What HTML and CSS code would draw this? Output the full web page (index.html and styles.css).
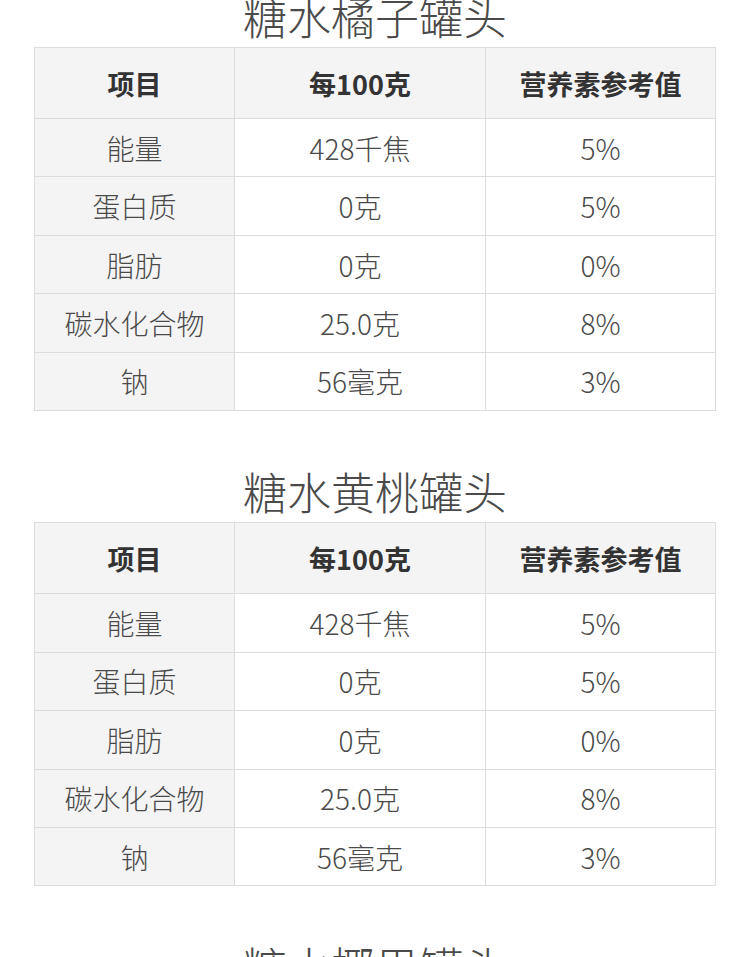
FILE: index.html
```html
<!DOCTYPE html>
<html lang="zh-CN">
<head>
<meta charset="utf-8">
<title>营养成分表</title>
<link rel="stylesheet" href="styles.css">
</head>
<body>
<main class="page">
  <section class="product first">
    <h2 class="product-title">糖水橘子罐头</h2>
    <table class="nutrition">
      <thead>
        <tr><th class="c1">项目</th><th class="c2">每100克</th><th class="c3">营养素参考值</th></tr>
      </thead>
      <tbody>
        <tr><td class="c1">能量</td><td>428千焦</td><td>5%</td></tr>
        <tr><td class="c1">蛋白质</td><td>0克</td><td>5%</td></tr>
        <tr><td class="c1">脂肪</td><td>0克</td><td>0%</td></tr>
        <tr><td class="c1">碳水化合物</td><td>25.0克</td><td>8%</td></tr>
        <tr><td class="c1">钠</td><td>56毫克</td><td>3%</td></tr>
      </tbody>
    </table>
  </section>
  <section class="product">
    <h2 class="product-title">糖水黄桃罐头</h2>
    <table class="nutrition">
      <thead>
        <tr><th class="c1">项目</th><th class="c2">每100克</th><th class="c3">营养素参考值</th></tr>
      </thead>
      <tbody>
        <tr><td class="c1">能量</td><td>428千焦</td><td>5%</td></tr>
        <tr><td class="c1">蛋白质</td><td>0克</td><td>5%</td></tr>
        <tr><td class="c1">脂肪</td><td>0克</td><td>0%</td></tr>
        <tr><td class="c1">碳水化合物</td><td>25.0克</td><td>8%</td></tr>
        <tr><td class="c1">钠</td><td>56毫克</td><td>3%</td></tr>
      </tbody>
    </table>
  </section>
  <section class="product">
    <h2 class="product-title">糖水椰果罐头</h2>
  </section>
</main>
</body>
</html>
```
FILE: styles.css
```css
html, body {
  margin: 0;
  padding: 0;
  background: #fff;
}
body {
  font-family: "Noto Sans CJK SC", "Noto Sans", sans-serif;
  color: #444;
  overflow: hidden;
}
.page {
  width: 750px;
  display: flex;
  flex-direction: column;
}
.product {
  display: flex;
  flex-direction: column;
  align-items: center;
  margin-top: 58px;
}
.product.first {
  margin-top: -6px;
}
.product-title {
  margin: 0 0 9px;
  height: 44px;
  font-size: 44px;
  line-height: 44px;
  font-weight: 300;
  color: #4a4a4a;
  text-align: center;
}
.nutrition {
  width: 682px;
  border-collapse: collapse;
  table-layout: fixed;
  font-size: 28px;
  text-align: center;
}
.nutrition th,
.nutrition td {
  border: 1px solid #dcdcdc;
  padding: 0;
  vertical-align: middle;
}
.nutrition th {
  height: 70px;
  background: #f4f4f4;
  color: #333;
  font-weight: 700;
  font-size: 27px;
}
.nutrition td {
  height: 57.45px;
  font-weight: 300;
  color: #4a4a4a;
}
.nutrition .c1 {
  width: 199px;
}
.nutrition td.c1 {
  background: #f4f4f4;
}
.nutrition .c2 {
  width: 250px;
}
```
